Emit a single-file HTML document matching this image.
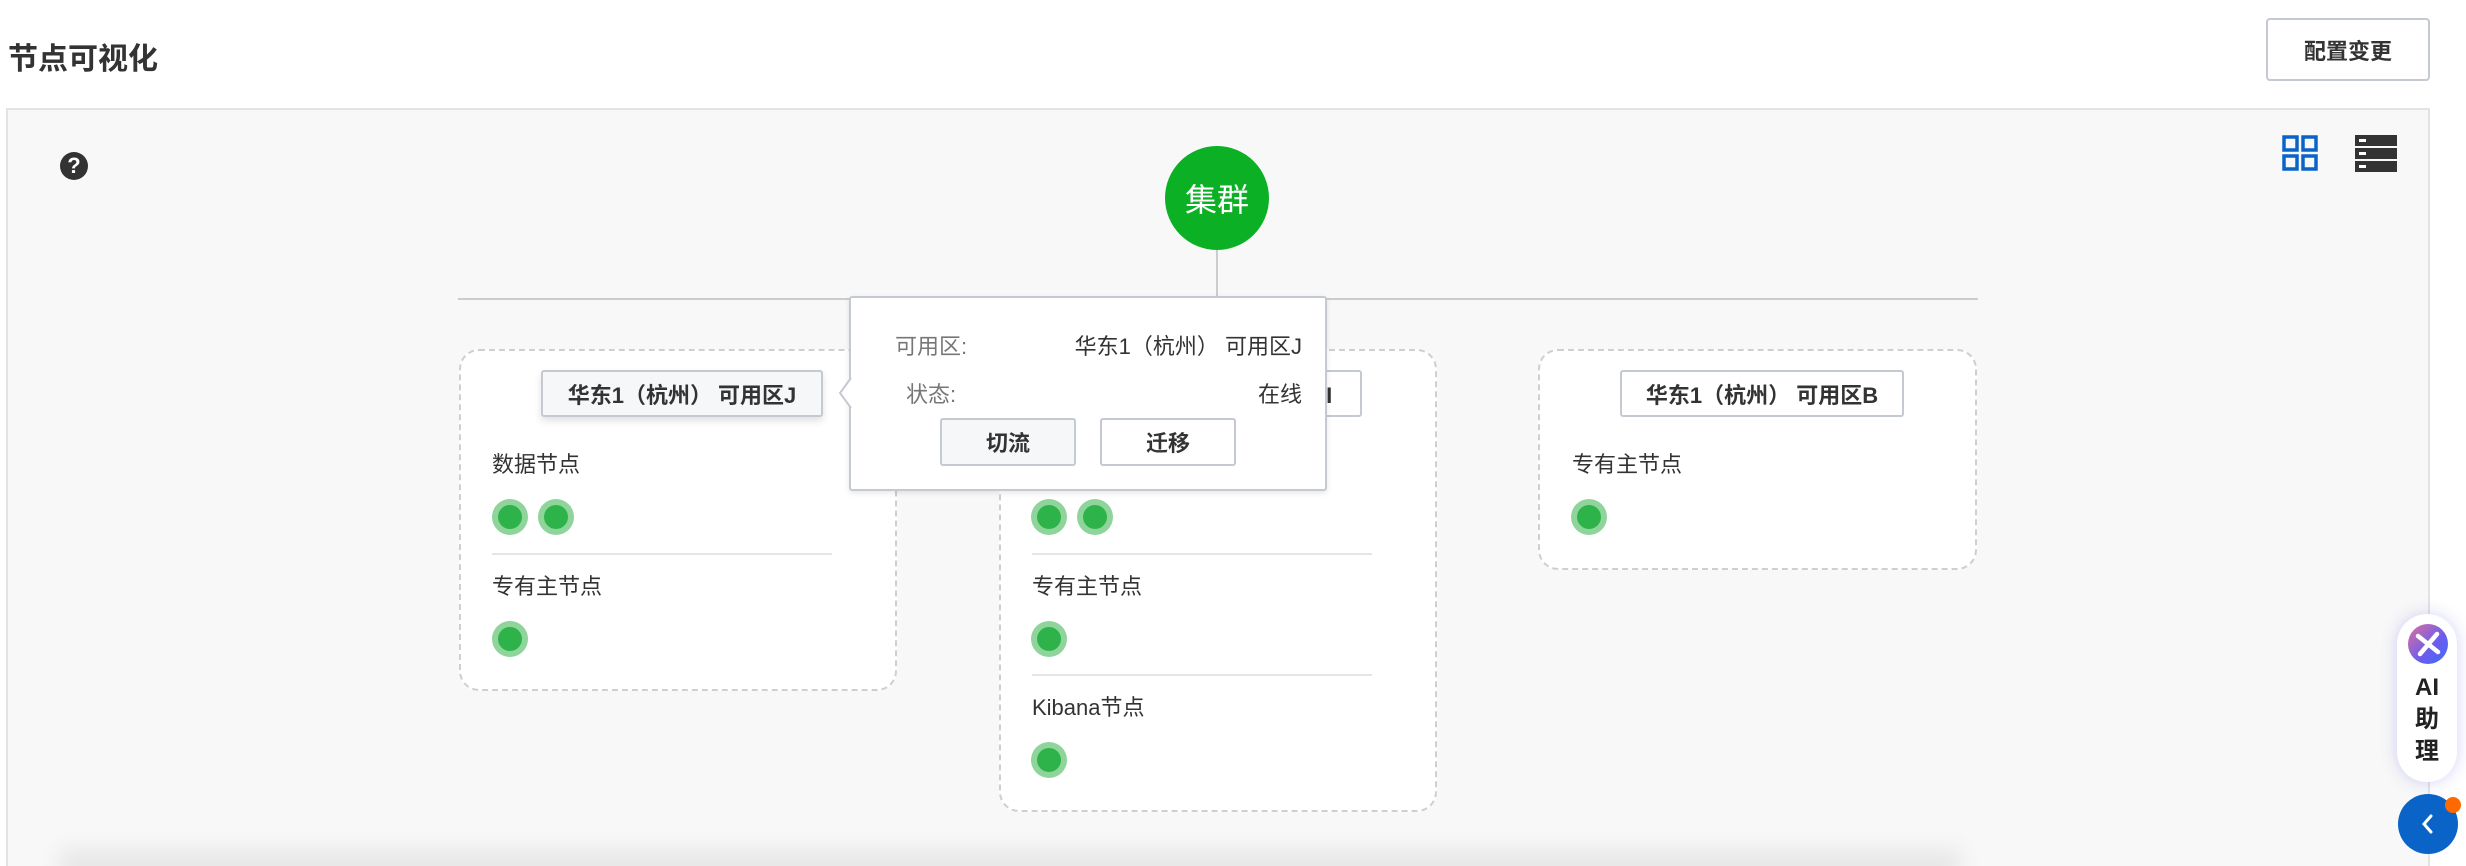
<!DOCTYPE html>
<html><head><meta charset="utf-8">
<style>
*{box-sizing:border-box;margin:0;padding:0}
html,body{width:2466px;height:866px;overflow:hidden}
body{background:#fff;font-family:"Liberation Sans","Noto Sans CJK SC",sans-serif;color:#333;position:relative}
.abs{position:absolute}
.title{left:8px;top:40px;font-size:30px;font-weight:bold;color:#333;line-height:40px}
.btn{left:2266px;top:18px;width:164px;height:63px;border:2px solid #c5c9d0;border-radius:4px;font-size:22px;font-weight:bold;display:flex;align-items:center;justify-content:center;color:#333}
.panel{left:6px;top:108px;width:2424px;height:758px;background:#f8f8f8;border:2px solid #e3e3e3;border-bottom:none}
.card{background:#fff;border:2px dashed #cfcfcf;border-radius:20px}
.tag{height:47px;border:2px solid #c5c9d0;border-radius:3px;background:#fff;font-size:22px;font-weight:bold;display:flex;align-items:center;justify-content:center;color:#333;white-space:nowrap}
.lbl{font-size:22px;color:#333;line-height:30px}
.dot{width:36px;height:36px;border-radius:50%;background:#8fd49b;display:flex;align-items:center;justify-content:center}
.dot::after{content:"";width:24px;height:24px;border-radius:50%;background:#2db34a}
.hr{height:2px;background:#e5e5e5}
.pbtn{height:48px;width:136px;border:2px solid #c5c9d0;border-radius:3px;font-size:22px;font-weight:bold;display:flex;align-items:center;justify-content:center;background:#fff}
</style></head><body>
<div class="abs title">节点可视化</div>
<div class="abs btn">配置变更</div>
<div class="abs panel"></div>
<div class="abs" style="left:60px;top:152px;width:28px;height:28px;border-radius:50%;background:#333;color:#fff;font-size:22px;font-weight:bold;text-align:center;line-height:28px">?</div>
<svg class="abs" style="left:2282px;top:135px" width="36" height="36"><g fill="none" stroke="#0a64c8" stroke-width="3.5"><rect x="2" y="2" width="13" height="13"/><rect x="21" y="2" width="13" height="13"/><rect x="2" y="21" width="13" height="13"/><rect x="21" y="21" width="13" height="13"/></g></svg>
<svg class="abs" style="left:2355px;top:135px" width="42" height="37"><g fill="#333"><rect x="0" y="0" width="42" height="11"/><rect x="0" y="13" width="42" height="11"/><rect x="0" y="26" width="42" height="11"/></g><g fill="#fff"><rect x="4" y="4" width="7" height="3"/><rect x="4" y="17" width="7" height="3"/><rect x="4" y="30" width="7" height="3"/></g></svg>
<div class="abs" style="left:1165px;top:146px;width:104px;height:104px;border-radius:50%;background:#0cb024;color:#fff;font-size:32px;display:flex;align-items:center;justify-content:center">集群</div>
<div class="abs" style="left:1216px;top:250px;width:2px;height:49px;background:#ccc"></div>
<div class="abs" style="left:458px;top:298px;width:1520px;height:2px;background:#ccc"></div>

<div class="abs card" style="left:459px;top:349px;width:438px;height:342px"></div>
<div class="abs tag" style="left:541px;top:370px;width:282px;background:#f6f7f9;box-shadow:0 4px 8px rgba(0,0,0,.12)">华东1（杭州） 可用区J</div>
<div class="abs lbl" style="left:492px;top:450px">数据节点</div>
<div class="abs dot" style="left:492px;top:499px"></div>
<div class="abs dot" style="left:538px;top:499px"></div>
<div class="abs hr" style="left:492px;top:553px;width:340px"></div>
<div class="abs lbl" style="left:492px;top:572px">专有主节点</div>
<div class="abs dot" style="left:492px;top:621px"></div>

<div class="abs card" style="left:999px;top:349px;width:438px;height:463px"></div>
<div class="abs tag" style="left:1080px;top:370px;width:282px">华东1（杭州） 可用区I</div>
<div class="abs dot" style="left:1031px;top:499px"></div>
<div class="abs dot" style="left:1077px;top:499px"></div>
<div class="abs hr" style="left:1032px;top:553px;width:340px"></div>
<div class="abs lbl" style="left:1032px;top:572px">专有主节点</div>
<div class="abs dot" style="left:1031px;top:621px"></div>
<div class="abs hr" style="left:1032px;top:674px;width:340px"></div>
<div class="abs lbl" style="left:1032px;top:693px">Kibana节点</div>
<div class="abs dot" style="left:1031px;top:742px"></div>

<div class="abs card" style="left:1538px;top:349px;width:439px;height:221px"></div>
<div class="abs tag" style="left:1620px;top:370px;width:284px">华东1（杭州） 可用区B</div>
<div class="abs lbl" style="left:1572px;top:450px">专有主节点</div>
<div class="abs dot" style="left:1571px;top:499px"></div>

<div class="abs" style="left:849px;top:296px;width:478px;height:195px;background:#fff;border:2px solid #c5c9d0;border-radius:3px;box-shadow:0 2px 6px rgba(0,0,0,.1)"></div>
<svg class="abs" style="left:838px;top:378px" width="14" height="30"><path d="M13 0 L2 15 L13 30" fill="#fff" stroke="#c5c9d0" stroke-width="2"/></svg>
<div class="abs lbl" style="left:895px;top:332px;color:#777">可用区:</div>
<div class="abs lbl" style="left:1056px;top:332px;width:246px;text-align:right">华东1（杭州） 可用区J</div>
<div class="abs lbl" style="left:906px;top:380px;color:#777">状态:</div>
<div class="abs lbl" style="left:1200px;top:380px;width:102px;text-align:right">在线</div>
<div class="abs pbtn" style="left:940px;top:418px;background:#f6f7f9">切流</div>
<div class="abs pbtn" style="left:1100px;top:418px">迁移</div>

<div class="abs" style="left:60px;top:850px;width:1900px;height:30px;background:#e6e6e6;filter:blur(10px)"></div>

<div class="abs" style="left:2397px;top:614px;width:60px;height:168px;border-radius:30px;background:#fff;box-shadow:0 0 16px rgba(110,110,230,.3)"></div>
<div class="abs" style="left:2408px;top:624px;width:40px;height:40px;border-radius:50%;background:linear-gradient(135deg,#e0709a,#6a5cf0 60%,#3f6df5)"></div>
<svg class="abs" style="left:2408px;top:624px" width="40" height="40"><path d="M10 12 L30 28 M29 10 L12 30" stroke="#fff" stroke-width="4.5" stroke-linecap="round"/></svg>
<div class="abs" style="left:2397px;top:672px;width:60px;text-align:center;font-size:24px;font-weight:bold;line-height:32px;color:#222">AI<br>助<br>理</div>
<div class="abs" style="left:2398px;top:794px;width:60px;height:60px;border-radius:50%;background:#0a64c8"></div>
<svg class="abs" style="left:2418px;top:812px" width="20" height="24"><path d="M13 4 L6 12 L13 20" fill="none" stroke="#fff" stroke-width="3" stroke-linecap="round"/></svg>
<div class="abs" style="left:2445px;top:797px;width:16px;height:16px;border-radius:50%;background:#ff6a00"></div>
</body></html>
